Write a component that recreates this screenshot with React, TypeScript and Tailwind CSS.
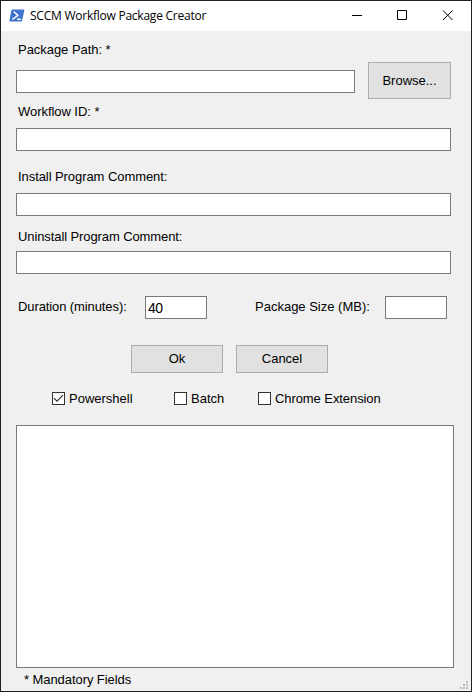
import React from "react";

function Field({ className = "", value = "", label }: { className?: string; value?: string; label: string }) {
  return (
    <input
      aria-label={label}
      defaultValue={value}
      className={`block h-[23px] border border-[#7a7a7a] bg-white pl-[2px] text-[14px] tracking-[-0.5px] text-black outline-none ${className}`}
    />
  );
}

function Label({ children, className = "" }: { children: React.ReactNode; className?: string }) {
  return <div className={`h-4 whitespace-nowrap leading-[18px] ${className}`}>{children}</div>;
}

function Button({ children, className = "" }: { children: React.ReactNode; className?: string }) {
  return (
    <button className={`shrink-0 border border-[#adadad] bg-[#e1e1e1] text-center leading-4 ${className}`}>{children}</button>
  );
}

function Check({ label, checked = false, className = "" }: { label: string; checked?: boolean; className?: string }) {
  return (
    <label className={`flex h-4 shrink-0 items-center gap-1 whitespace-nowrap ${className}`}>
      <span className="block size-[13px] shrink-0 border border-[#333] bg-white">
        {checked && (
          <svg viewBox="0 0 11 11" className="block size-[11px]" fill="none" stroke="#333" strokeWidth="1.2">
            <path d="M1 5.2 4 8.2 10 2.2" />
          </svg>
        )}
      </span>
      <span className="h-4 leading-[18px]">{label}</span>
    </label>
  );
}

export default function App() {
  return (
    <div className="flex h-[692px] w-[472px] flex-col overflow-hidden border border-[#231f20] bg-[#f0f0f0] font-['Liberation_Sans',Arial,sans-serif] text-[13px] text-black">
      <header className="flex h-[30px] shrink-0 items-center bg-white pl-2">
        <svg width="16" height="13" viewBox="0 0 16 13" className="-mt-px shrink-0">
          <path d="M3.3 .5h11.3q.9 0 .7.9l-2.2 10.2q-.2.9-1.1.9H1.1q-.9 0-.7-.9L2.4 1.3q.2-.8.9-.8Z" fill="#3f73cc" />
          <path d="m4.7 2.5 4.2 4L3.3 10.4M8.2 10.2h3.6" fill="none" stroke="#fff" strokeWidth="1.4" />
        </svg>
        <h1 className="ml-[5px] whitespace-nowrap font-['Open_Sans','Noto_Sans',sans-serif] text-[12px] leading-4 tracking-[-0.24px]">
          SCCM Workflow Package Creator
        </h1>
        <div className="ml-auto mr-[13px] flex h-full items-center">
          <svg width="114" height="30" viewBox="0 0 114 30" fill="none" stroke="#000" strokeWidth="1">
            <path d="M8 14.5h10M53.5 9.5h9v9h-9zM99 9.5l9.5 9.5M108.5 9.5 99 19" />
          </svg>
        </div>
      </header>
      <main className="flex flex-1 flex-col pl-[15px]">
        <div className="flex h-[68px] pt-[10px]">
          <div className="w-[352px]">
            <Label className="pl-[2px] tracking-[-0.04px]">Package Path: *</Label>
            <Field label="Package Path" className="mt-[13px] w-[339px]" />
          </div>
          <Button className="mt-[21px] h-[37px] w-[83px]">Browse...</Button>
        </div>
        <Label className="mt-1 pl-[2px] tracking-[-0.05px]">Workflow ID: *</Label>
        <Field label="Workflow ID" className="mt-[9px] w-[435px]" />
        <Label className="mt-[17px] pl-[2px] tracking-[-0.07px]">Install Program Comment:</Label>
        <Field label="Install Program Comment" className="mt-[9px] w-[435px]" />
        <Label className="mt-3 pl-[2px] tracking-[-0.1px]">Uninstall Program Comment:</Label>
        <Field label="Uninstall Program Comment" className="mt-[7px] w-[435px]" />
        <div className="mt-[22px] flex h-[23px]">
          <Label className="mt-[2px] w-[129px] pl-[2px] tracking-[-0.1px]">Duration (minutes):</Label>
          <Field label="Duration" value="40" className="w-[62px]" />
          <Label className="ml-12 mt-[2px] w-[130px]">Package Size (MB):</Label>
          <Field label="Package Size" className="w-[62px]" />
        </div>
        <div className="mt-[26px] flex gap-[13px] pl-[115px]">
          <Button className="h-7 w-[92px]">Ok</Button>
          <Button className="h-7 w-[92px]">Cancel</Button>
        </div>
        <div className="mt-[17px] flex h-4 pl-9">
          <Check label="Powershell" checked className="w-[122px]" />
          <Check label="Batch" className="w-[84px]" />
          <Check label="Chrome Extension" className="tracking-[-0.08px]" />
        </div>
        <textarea aria-label="Output" className="mt-[19px] block h-[243px] w-[438px] resize-none border border-[#7a7a7a] bg-white outline-none" />
        <div className="flex flex-1 justify-between pl-2">
          <Label className="mt-[3px] tracking-[-0.07px]">* Mandatory Fields</Label>
          <svg width="11" height="11" viewBox="0 0 11 11" fill="#bcbcbc" className="mr-px mt-[12px]">
            <path d="M7 1h2v2H7zM4 4h2v2H4zM7 4h2v2H7zM1 7h2v2H1zM4 7h2v2H4zM7 7h2v2H7z" />
          </svg>
        </div>
      </main>
    </div>
  );
}
